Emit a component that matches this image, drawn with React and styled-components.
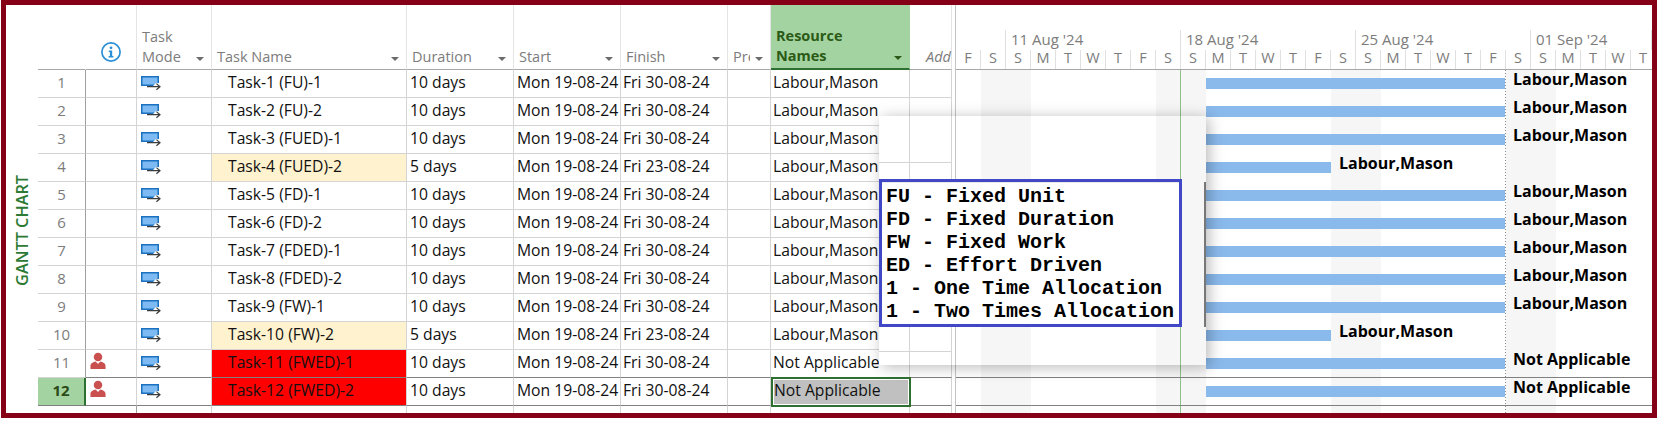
import React from "react";
import styled, { createGlobalStyle } from "styled-components";

const Global = createGlobalStyle`
  html, body { margin: 0; padding: 0; background: #fff; }
  body { font-family: "Open Sans", "Noto Sans", sans-serif; }
`;

const COLS = "48px 51px 75px 195px 107px 107px 107px 43px 139px 42px";

const Frame = styled.div`
  position: relative;
  box-sizing: border-box;
  width: 1656px;
  height: 418px;
  margin-left: 1px;
  border: 5px solid #850017;
  display: flex;
  background: #fff;
  overflow: hidden;
`;
const Side = styled.div`
  width: 32px;
  flex: none;
  display: flex;
  align-items: center;
  justify-content: center;
  padding: 42px 0 0 0;
  box-sizing: border-box;
`;
const SideText = styled.div`
  writing-mode: vertical-rl;
  transform: rotate(180deg);
  color: #2d7a35;
  font-size: 16.3px;
  font-weight: 600;
  white-space: nowrap;
`;
const Table = styled.div`
  width: 914px;
  flex: none;
  display: flex;
  flex-direction: column;
`;
const HeadRow = styled.div`
  display: grid;
  grid-template-columns: ${COLS};
  height: 65px;
`;
const Head = styled.div`
  box-sizing: border-box;
  display: flex;
  align-items: flex-end;
  padding: 0 ${(p) => p.$right ?? 7}px 2px ${(p) => p.$left ?? 5}px;
  background: ${(p) => (p.$active ? "#a3d3a0" : "#fff")};
  border-right: 1px solid ${(p) => (p.$active ? "#a3d3a0" : p.$plain ? "#fff" : "#e4e4e4")};
  border-bottom: ${(p) => (p.$active ? "2px solid #2e7031" : "1px solid #a8a8a8")};
  color: ${(p) => (p.$active ? "#2b5a16" : "#7c7c7c")};
  font-size: 14.5px;
  line-height: 20px;
  font-weight: ${(p) => (p.$active ? 700 : 400)};
  font-style: ${(p) => (p.$italic ? "italic" : "normal")};
  justify-content: ${(p) => (p.$end ? "flex-end" : "flex-start")};
`;
const HeadText = styled.span`
  white-space: pre-line;
  overflow: ${(p) => (p.$max ? "hidden" : "visible")};
  max-width: ${(p) => p.$max ?? "none"};
`;
const Caret = styled.i`
  margin: 0 0 6px auto;
  flex: none;
  width: 0;
  height: 0;
  border-left: 4px solid transparent;
  border-right: 4px solid transparent;
  border-top: 4px solid ${(p) => (p.$active ? "#2b5a16" : "#6b6b6b")};
`;
const InfoWrap = styled.span`
  display: flex;
  margin: 0 0 -1px 10px;
  padding-bottom: 6px;
`;
const Row = styled.div`
  display: grid;
  grid-template-columns: ${COLS};
  height: 28px;
`;
const Cell = styled.div`
  box-sizing: border-box;
  display: flex;
  align-items: center;
  padding: 0 0 4px ${(p) => p.$pad ?? 3}px;
  background: ${(p) => p.$bg ?? "#fff"};
  border-right: 1px solid ${(p) => (p.$strong ? "#a0a0a0" : "#d4d4d4")};
  border-bottom: 1px solid ${(p) => (p.$dark ? "#808080" : "#d4d4d4")};
  color: #111;
  font-size: 15.7px;
  white-space: nowrap;
`;
const IdCell = styled.div`
  box-sizing: border-box;
  display: flex;
  align-items: center;
  justify-content: center;
  padding: 0 0 4px;
  background: ${(p) => (p.$on ? "#a3d3a0" : "#fff")};
  border-right: ${(p) => (p.$on ? "2px solid #2e7031" : "1px solid #a0a0a0")};
  border-bottom: 1px solid ${(p) => (p.$dark ? "#808080" : "#d4d4d4")};
  color: ${(p) => (p.$on ? "#2b4a16" : "#7c7c7c")};
  font-size: 15px;
  font-weight: ${(p) => (p.$on ? 700 : 400)};
`;
const SelectedCell = styled(Cell)`
  margin: -1px -1px -1px 0;
  padding-left: 1px;
  border: 2px solid #2e7031;
  background: #c0c0c0;
  box-shadow: inset 0 0 0 1px #fff;
  z-index: 1;
`;
const Tail = styled.div`
  display: grid;
  grid-template-columns: ${COLS};
  flex: 1;
`;
const TailCell = styled.div`
  border-right: 1px solid ${(p) => (p.$strong ? "#a0a0a0" : p.$none ? "#fff" : "#d4d4d4")};
`;
const Gap = styled.div`
  width: 4px;
  flex: none;
  box-sizing: border-box;
  border-right: 1px solid #c4c4c4;
`;
const Gantt = styled.div`
  width: 696px;
  flex: none;
  display: flex;
  flex-direction: column;
`;
const Timescale = styled.div`
  height: 65px;
  box-sizing: border-box;
  border-bottom: 1px solid #a8a8a8;
  display: flex;
  flex-direction: column;
  justify-content: flex-end;
`;
const Weeks = styled.div`
  display: flex;
  height: 20px;
`;
const Week = styled.div`
  box-sizing: border-box;
  flex: none;
  width: ${(p) => p.$w}px;
  padding-left: 5px;
  border-right: 1px solid #e0e0e0;
  color: #7c7c7c;
  font-size: 15px;
  line-height: 18px;
  white-space: nowrap;
`;
const Days = styled.div`
  display: flex;
  height: 19px;
`;
const Day = styled.div`
  box-sizing: border-box;
  flex: none;
  width: 25px;
  border-right: 1px solid #e0e0e0;
  color: #7c7c7c;
  font-size: 14.5px;
  line-height: 15px;
  text-align: center;
`;
const stripes = [25, 200, 375, 550]
  .map((x) => `linear-gradient(#f6f6f6, #f6f6f6) ${x}px 0 / 50px 100% no-repeat`)
  .join(", ");
const ChartBody = styled.div`
  flex: 1;
  display: flex;
  flex-direction: column;
  background:
    linear-gradient(#8cc28a, #8cc28a) 224px 0 / 1px 100% no-repeat,
    repeating-linear-gradient(#8a8a8a 0 1px, transparent 1px 3px) 549px 0 / 1px 100% no-repeat,
    ${stripes};
`;
const ChartRow = styled.div`
  height: 28px;
  box-sizing: border-box;
  display: flex;
  align-items: flex-start;
  border-bottom: 1px solid ${(p) => (p.$dark ? "#808080" : "transparent")};
`;
const Bar = styled.div`
  flex: none;
  margin: 8px 0 0 250px;
  height: 11px;
  width: ${(p) => p.$w}px;
  background: #8ab9eb;
`;
const BarLabel = styled.div`
  margin: -1px 0 0 8px;
  font-size: 16px;
  line-height: 20px;
  font-weight: 700;
  color: #000;
  white-space: nowrap;
`;
const Patch = styled.div`
  position: absolute;
  left: 873px;
  top: 111px;
  width: 327px;
  height: 249px;
  box-sizing: border-box;
  padding-top: 63px;
  box-shadow: 3px 2px 14px rgba(0, 0, 0, 0.28);
  z-index: 2;
  background:
    linear-gradient(#777, #777) 325px 66px / 2px 145px no-repeat,
    linear-gradient(#8cc28a, #8cc28a) 301px 0 / 1px 63px no-repeat,
    linear-gradient(#8cc28a, #8cc28a) 301px 211px / 1px 41px no-repeat,
    linear-gradient(#d4d4d4, #d4d4d4) 0 46px / 72px 1px no-repeat,
    linear-gradient(#d4d4d4, #d4d4d4) 0 235px / 72px 1px no-repeat,
    linear-gradient(#d4d4d4, #d4d4d4) 30px 0 / 1px 100% no-repeat,
    linear-gradient(#d4d4d4, #d4d4d4) 72px 0 / 1px 100% no-repeat,
    linear-gradient(#c4c4c4, #c4c4c4) 76px 0 / 1px 100% no-repeat,
    linear-gradient(#f6f6f6, #f6f6f6) 102px 0 / 50px 100% no-repeat,
    linear-gradient(#f6f6f6, #f6f6f6) 277px 0 / 50px 100% no-repeat,
    #fff;
`;
const Legend = styled.div`
  box-sizing: border-box;
  width: 303px;
  height: 148px;
  padding: 3px 0 0 4px;
  border: 3px solid #4048c8;
  background: #fff;
  box-shadow: inset 0 1px 0 #e8e8e8;
  font-family: "Liberation Mono", monospace;
  font-weight: 700;
  font-size: 20px;
  line-height: 23px;
  color: #000;
  white-space: pre;
`;

const InfoIcon = () => (
  <svg width="20" height="20" viewBox="0 0 20 20" aria-hidden="true">
    <circle cx="10" cy="10" r="9.1" fill="#fff" stroke="#2b8fd6" strokeWidth="1.7" />
    <circle cx="10" cy="5.8" r="1.4" fill="#2b8fd6" />
    <path d="M7.8 8.4h3.4v5.6h1.2v1.5H7.6V14h1.3V9.9H7.8z" fill="#2b8fd6" />
  </svg>
);
const ModeIcon = () => (
  <svg width="22" height="18" viewBox="0 0 22 18" aria-hidden="true">
    <rect x="1" y="1" width="18" height="10" fill="#1b70c0" />
    <rect x="2.5" y="2.5" width="15" height="7" fill="#7db9f2" />
    <path d="M16 8h3v3h-6z" fill="#fff" />
    <path d="M7 11.7h13M16.4 8.6l3.6 3.1-3.6 3.1" fill="none" stroke="#3c3c3c" strokeWidth="1.2" />
  </svg>
);
const PersonIcon = () => (
  <svg width="16" height="18" viewBox="0 0 18 19" aria-hidden="true">
    <circle cx="9" cy="5" r="4.8" fill="#c9504f" />
    <path d="M0.5 18.5v-3.2C0.5 12.4 3.6 10.6 6.4 10.2L9 13l2.6-2.8c2.8.4 5.9 2.2 5.9 5.1v3.2z" fill="#c9504f" />
  </svg>
);
const IconSlot = styled.span`
  display: flex;
  margin: ${(p) => p.$m};
`;

const tasks = [
  ["Task-1 (FU)-1", 10],
  ["Task-2 (FU)-2", 10],
  ["Task-3 (FUED)-1", 10],
  ["Task-4 (FUED)-2", 5],
  ["Task-5 (FD)-1", 10],
  ["Task-6 (FD)-2", 10],
  ["Task-7 (FDED)-1", 10],
  ["Task-8 (FDED)-2", 10],
  ["Task-9 (FW)-1", 10],
  ["Task-10 (FW)-2", 5],
  ["Task-11 (FWED)-1", 10, true],
  ["Task-12 (FWED)-2", 10, true],
];
const days = "FSSMTWTFSSMTWTFSSMTWTFSSMTWT".split("");

export default function App() {
  return (
    <>
      <Global />
      <Frame>
        <Side>
          <SideText>GANTT CHART</SideText>
        </Side>
        <Table>
          <HeadRow>
            <Head $plain />
            <Head>
              <InfoWrap>
                <InfoIcon />
              </InfoWrap>
            </Head>
            <Head>
              <HeadText>{"Task\nMode"}</HeadText>
              <Caret />
            </Head>
            <Head>
              <HeadText>Task Name</HeadText>
              <Caret />
            </Head>
            <Head>
              <HeadText>Duration</HeadText>
              <Caret />
            </Head>
            <Head>
              <HeadText>Start</HeadText>
              <Caret />
            </Head>
            <Head>
              <HeadText>Finish</HeadText>
              <Caret />
            </Head>
            <Head>
              <HeadText $max="17px">Pre</HeadText>
              <Caret />
            </Head>
            <Head $active>
              <HeadText>{"Resource\nNames"}</HeadText>
              <Caret $active />
            </Head>
            <Head $italic $end $left={0} $right={0}>
              <HeadText>Add</HeadText>
            </Head>
          </HeadRow>
          {tasks.map(([name, d, red], i) => {
            const on = i === 11;
            const dark = i >= 10;
            const res = red ? "Not Applicable" : "Labour,Mason";
            return (
              <Row key={name}>
                <IdCell $on={on} $dark={on}>
                  {i + 1}
                </IdCell>
                <Cell $dark={dark} $pad={4}>
                  {red && (
                    <IconSlot $m="-2px 0 0 0">
                      <PersonIcon />
                    </IconSlot>
                  )}
                </Cell>
                <Cell $dark={dark} $pad={3}>
                  <IconSlot $m="4px 0 0 0">
                    <ModeIcon />
                  </IconSlot>
                </Cell>
                <Cell $dark={dark} $pad={16} $bg={red ? "#ff0000" : d === 5 ? "#fff2cf" : "#fff"}>
                  {name}
                </Cell>
                <Cell $dark={dark}>{d} days</Cell>
                <Cell $dark={dark}>Mon 19-08-24</Cell>
                <Cell $dark={dark} $pad={2}>
                  Fri {d === 5 ? "23" : "30"}-08-24
                </Cell>
                <Cell $dark={dark} />
                {on ? (
                  <SelectedCell>{res}</SelectedCell>
                ) : (
                  <Cell $dark={dark} $pad={2}>
                    {res}
                  </Cell>
                )}
                <Cell $dark={dark} />
              </Row>
            );
          })}
          <Tail>
            <TailCell $none />
            <TailCell $strong />
            {Array.from({ length: 8 }, (_, i) => (
              <TailCell key={i} />
            ))}
          </Tail>
        </Table>
        <Gap />
        <Gantt>
          <Timescale>
            <Weeks>
              <Week $w={50} />
              <Week $w={175}>11 Aug '24</Week>
              <Week $w={175}>18 Aug '24</Week>
              <Week $w={175}>25 Aug '24</Week>
              <Week $w={121}>01 Sep '24</Week>
            </Weeks>
            <Days>
              {days.map((d, i) => (
                <Day key={i}>{d}</Day>
              ))}
            </Days>
          </Timescale>
          <ChartBody>
            {tasks.map(([name, d, red], i) => (
              <ChartRow key={name} $dark={i >= 10}>
                <Bar $w={d === 5 ? 125 : 299} />
                <BarLabel>{red ? "Not Applicable" : "Labour,Mason"}</BarLabel>
              </ChartRow>
            ))}
          </ChartBody>
        </Gantt>
        <Patch>
          <Legend>
            {`FU - Fixed Unit
FD - Fixed Duration
FW - Fixed Work
ED - Effort Driven
1 - One Time Allocation
1 - Two Times Allocation`}
          </Legend>
        </Patch>
      </Frame>
    </>
  );
}
